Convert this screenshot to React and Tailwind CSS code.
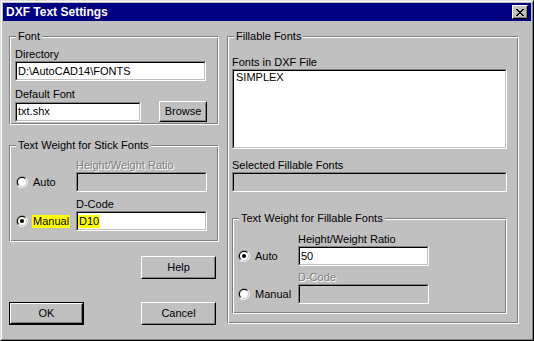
import React from "react";

function Sunken({ className = "", disabled = false, list = false, children }) {
  return (
    <div className={`border border-t-[#808080] border-l-[#808080] border-b-white border-r-white ${className}`}>
      <div
        className={`h-full border border-t-black border-l-black border-b-[#c0c0c0] border-r-[#c0c0c0] flex pl-px ${
          disabled ? "bg-[#c0c0c0]" : "bg-white"
        } ${list ? "items-start" : "items-center"}`}
      >
        {children}
      </div>
    </div>
  );
}

function Btn({ className = "", def = false, children }) {
  const body = (
    <div className="h-full border border-t-white border-l-white border-b-black border-r-black">
      <div className="h-full border border-t-[#c0c0c0] border-l-[#c0c0c0] border-b-[#808080] border-r-[#808080] flex items-center justify-center">
        {children}
      </div>
    </div>
  );
  if (def) {
    return <div className={`border border-black ${className}`}>{body}</div>;
  }
  return <div className={className}>{body}</div>;
}

function Group({ label, className = "", children }) {
  return (
    <div
      className={`relative border border-t-[#808080] border-l-[#808080] border-b-white border-r-white shadow-[inset_1px_1px_0_#fff,inset_-1px_-1px_0_#808080] ${className}`}
    >
      <span className="absolute top-[-7px] left-[6px] px-[2px] bg-[#c0c0c0] leading-[13px] whitespace-nowrap">
        {label}
      </span>
      {children}
    </div>
  );
}

function Radio({ checked = false }) {
  return (
    <svg width="12" height="12" viewBox="0 0 12 12" className="shrink-0">
      <path d="M1.76 10.24 A6 6 0 0 1 10.24 1.76 Z" fill="#808080" />
      <path d="M10.24 1.76 A6 6 0 0 1 1.76 10.24 Z" fill="#ffffff" />
      <path d="M2.46 9.54 A5 5 0 0 1 9.54 2.46 Z" fill="#000000" />
      <path d="M9.54 2.46 A5 5 0 0 1 2.46 9.54 Z" fill="#c0c0c0" />
      <circle cx="6" cy="6" r="4" fill="#ffffff" />
      {checked && <circle cx="6" cy="6" r="2" fill="#000000" />}
    </svg>
  );
}

function RadioLabel({ checked = false, highlight = false, children }) {
  return (
    <div className="flex items-center h-[20px]">
      <Radio checked={checked} />
      <span className={`ml-[4px] px-px leading-[13px] ${highlight ? "bg-[#ffff00]" : ""}`}>{children}</span>
    </div>
  );
}

function Disabled({ children, className = "" }) {
  return (
    <div className={`text-[#808080] [text-shadow:1px_1px_0_#ffffff] leading-[13px] ${className}`}>{children}</div>
  );
}

function CloseBtn() {
  return (
    <div className="w-[16px] h-[14px] border border-t-white border-l-white border-b-black border-r-black">
      <div className="h-full border border-t-[#c0c0c0] border-l-[#c0c0c0] border-b-[#808080] border-r-[#808080] bg-[#c0c0c0] flex items-center justify-center">
        <svg width="8" height="7" viewBox="0 0 8 7" shapeRendering="crispEdges">
          <path
            d="M0 0h2v1h-2z M6 0h2v1h-2z M1 1h2v1h-2z M5 1h2v1h-2z M2 2h4v1h-4z M3 3h2v1h-2z M2 4h4v1h-4z M1 5h2v1h-2z M5 5h2v1h-2z M0 6h2v1h-2z M6 6h2v1h-2z"
            fill="#000000"
          />
        </svg>
      </div>
    </div>
  );
}

export default function App() {
  return (
    <div className="w-[534px] h-[341px] bg-[#c0c0c0] border border-t-[#dfdfdf] border-l-[#dfdfdf] border-r-black border-b-black font-['Liberation_Sans',Arial,sans-serif] text-[11px] leading-[13px] text-black select-none">
      <div className="h-full border border-t-white border-l-white border-r-[#808080] border-b-[#808080] p-px flex flex-col">
        <div className="h-[18px] shrink-0 bg-[#000080] flex items-center justify-between pl-[3px] pr-[3px]">
          <span className="text-white font-bold text-[12px] leading-[14px]">DXF Text Settings</span>
          <CloseBtn />
        </div>

        <div className="flex pl-[6px]">
          {/* Left column */}
          <div className="w-[210px] mt-[15px] flex flex-col">
            <Group label="Font" className="h-[89px]">
              <div className="pl-[5px] pt-[11px]">
                <div>Directory</div>
                <Sunken className="w-[191px] h-[20px]">{"D:\\AutoCAD14\\FONTS"}</Sunken>
                <div className="mt-[7px]">Default Font</div>
                <div className="flex items-center">
                  <Sunken className="w-[126px] h-[20px]">txt.shx</Sunken>
                  <Btn className="ml-[18px] w-[48px] h-[21px]">Browse</Btn>
                </div>
              </div>
            </Group>

            <Group label="Text Weight for Stick Fonts" className="mt-[20px] h-[97px]">
              <div className="pl-[6px] pt-[13px] grid grid-cols-[60px_131px]">
                <div />
                <Disabled>Height/Weight Ratio</Disabled>
                <RadioLabel>Auto</RadioLabel>
                <Sunken disabled className="h-[20px]" />
                <div className="mt-[6px]" />
                <div className="mt-[6px]">D-Code</div>
                <RadioLabel checked highlight>
                  Manual
                </RadioLabel>
                <Sunken className="h-[20px]">
                  <span className="bg-[#ffff00] -ml-px px-px">D10</span>
                </Sunken>
              </div>
            </Group>

            <Btn className="mt-[14px] ml-[132px] w-[75px] h-[23px]">Help</Btn>

            <div className="mt-[23px] flex gap-[57px]">
              <Btn def className="w-[75px] h-[23px]">
                OK
              </Btn>
              <Btn className="w-[75px] h-[23px]">Cancel</Btn>
            </div>
          </div>

          {/* Right column */}
          <div className="ml-[8px] w-[292px] mt-[15px]">
            <Group label="Fillable Fonts" className="h-[288px]">
              <div className="pl-[4px] pt-[19px]">
                <div>Fonts in DXF File</div>
                <Sunken list className="w-[275px] h-[80px]">
                  <span className="pl-px">SIMPLEX</span>
                </Sunken>
                <div className="mt-[10px]">Selected Fillable Fonts</div>
                <Sunken disabled className="w-[275px] h-[20px]" />

                <Group label="Text Weight for Fillable Fonts" className="mt-[26px] w-[275px] h-[96px]">
                  <div className="pl-[5px] pt-[14px] grid grid-cols-[60px_131px]">
                    <div />
                    <div>Height/Weight Ratio</div>
                    <RadioLabel checked>Auto</RadioLabel>
                    <Sunken className="h-[20px]">50</Sunken>
                    <div className="mt-[5px]" />
                    <Disabled className="mt-[5px]">D-Code</Disabled>
                    <RadioLabel>Manual</RadioLabel>
                    <Sunken disabled className="h-[20px]" />
                  </div>
                </Group>
              </div>
            </Group>
          </div>
        </div>
      </div>
    </div>
  );
}
